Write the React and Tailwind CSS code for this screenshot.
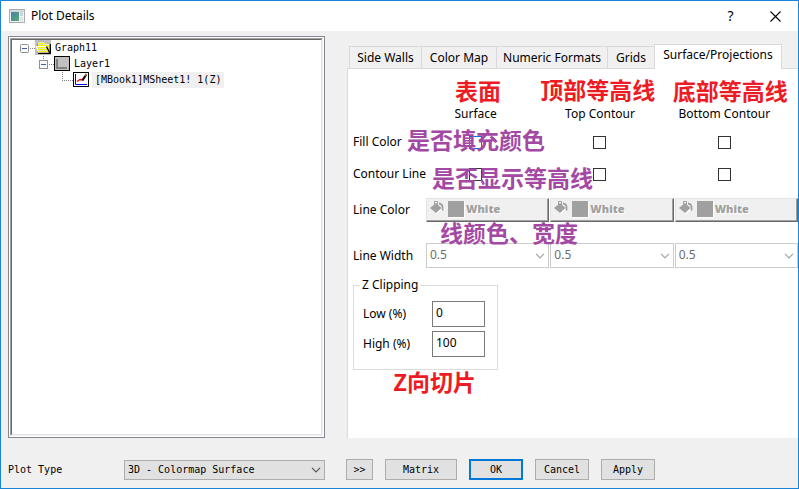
import React from "react";

const columns = [
  { id: "surface", title: "Surface", note: "表面", notePos: "left-[29px] -top-[28px]" },
  { id: "top", title: "Top Contour", note: "顶部等高线", notePos: "-left-[10px] -top-[29px]" },
  { id: "bottom", title: "Bottom Contour", note: "底部等高线", notePos: "-left-[2px] -top-[28px]" },
];

const rowGrid = "grid grid-cols-[72px_repeat(3,minmax(0,1fr))] gap-x-px items-center";
const noteBase =
  "pointer-events-none absolute z-10 whitespace-nowrap font-['Noto_Sans_CJK_SC',sans-serif] text-[23px] font-bold leading-6";
const mono = "font-['DejaVu_Sans_Mono','Liberation_Mono',monospace] text-[10px]";

function Note({ tone, pos, children }) {
  const color = tone === "red" ? "text-[#ed1c24]" : "text-[#a349a4]";
  return <span className={`${noteBase} ${color} ${pos}`}>{children}</span>;
}

function Chevron({ className }) {
  return (
    <svg
      viewBox="0 0 10 6"
      className={`pointer-events-none absolute top-1/2 h-[6px] w-[10px] -translate-y-1/2 ${className}`}
      fill="none"
      stroke="currentColor"
      strokeWidth="1.2"
    >
      <path d="M1 0.8 5 4.8 9 0.8" />
    </svg>
  );
}

function AppIcon() {
  return (
    <svg viewBox="0 0 16 14" className="h-[14px] w-4" shapeRendering="crispEdges">
      <defs>
        <linearGradient id="appPane" x1="0" y1="0" x2="1" y2="1">
          <stop offset="0" stopColor="#4d7fa5" />
          <stop offset="1" stopColor="#4fae77" />
        </linearGradient>
      </defs>
      <rect x="0.5" y="0.5" width="15" height="13" fill="#f3f3f3" stroke="#a9adb2" />
      <rect x="1" y="1" width="14" height="2" fill="#d4d8dc" />
      <rect x="2" y="3" width="8" height="9" fill="url(#appPane)" />
      <rect x="11" y="3" width="3" height="4" fill="#c9d4dc" />
      <rect x="11" y="8" width="3" height="4" fill="#dde2e6" />
    </svg>
  );
}

function Expander({ x, y }) {
  return (
    <g>
      <rect x={x + 0.5} y={y + 0.5} width="8" height="8" rx="1" fill="#fafafa" stroke="#919191" />
      <path d={`M${x + 2} ${y + 4.5}h5`} stroke="#3c5fb0" />
    </g>
  );
}

function GraphGlyph() {
  return (
    <svg viewBox="0 0 32 16" className="h-4 w-8 shrink-0">
      <defs>
        <pattern id="dither" width="2" height="2" patternUnits="userSpaceOnUse">
          <rect width="2" height="2" fill="#ffff00" />
          <rect width="1" height="1" fill="#d8d8b0" />
          <rect x="1" y="1" width="1" height="1" fill="#d8d8b0" />
        </pattern>
      </defs>
      <path d="M10 8.5h6" stroke="#808080" strokeDasharray="1 1" />
      <Expander x={0} y={4} />
      <rect x="15" y="0" width="16" height="15" fill="#c0c0c0" />
      <path d="M17.5 12.5v-9l2-2h4l2 2h4v9z" fill="url(#dither)" stroke="#808060" strokeWidth="0.8" />
      <path d="M18 3.5l1.500-1.500h4l2 2h4" fill="none" stroke="#fff" strokeWidth="0.8" />
      <path d="M30.5 4v9.500H18" fill="none" stroke="#000" />
      <path d="M18.500 12.500 16 7h10.500l3 5.500z" fill="url(#dither)" />
      <path d="M18.500 12.500 16 6.500h10.500" fill="none" stroke="#fff" />
      <path d="m26.500 6.500 3.500 7" stroke="#000" strokeWidth="1.300" />
    </svg>
  );
}

function LayerGlyph() {
  return (
    <svg viewBox="0 0 32 16" className="h-4 w-8 shrink-0" shapeRendering="crispEdges">
      <path d="M4.500 0v4M10 8.500h6" stroke="#808080" strokeDasharray="1 1" />
      <Expander x={0} y={4} />
      <rect x="15.500" y="0.500" width="15" height="14" fill="#c0c0c0" stroke="#000" />
      <path d="M18 3v9M17 12h11" stroke="#808080" strokeWidth="2" />
    </svg>
  );
}

function PlotGlyph() {
  return (
    <svg viewBox="0 0 28 16" className="h-4 w-7 shrink-0">
      <path d="M0.500 0v9M0 8.500h11" stroke="#808080" strokeDasharray="1 1" fill="none" />
      <rect x="11.500" y="0.500" width="15" height="14" fill="#fff" stroke="#000" />
      <path d="M13.500 2v10.500H25" fill="none" stroke="#0000ff" />
      <path d="m15 9.500 3-2 2 .5 3-4" fill="none" stroke="#ff0000" strokeWidth="1.400" />
      <path d="M24.500 2 22.500 5.500l-2 3" stroke="#000" strokeWidth="1.800" fill="none" />
      <path d="m24.500 2-1 1.800" stroke="#ffd000" />
    </svg>
  );
}

function Bucket() {
  return (
    <svg viewBox="0 0 14 14" className="h-[14px] w-[14px] shrink-0 text-[#a0a0a0]">
      <path d="M1 9 7 3.500 13 9 7 14z" fill="#fff" />
      <path d="M0 8 6 3l5.500 5L6 13z" fill="currentColor" />
      <path d="M4.500 5V1.500h3V6" fill="none" stroke="currentColor" />
      <path d="M9 3.500c3 .3 4 2 3.500 7" fill="none" stroke="currentColor" strokeWidth="1.800" />
    </svg>
  );
}

function ColorButton({ label }) {
  return (
    <button
      type="button"
      disabled
      aria-label={label}
      className="flex h-6 w-full items-start border border-t-[#e3e3e3] border-l-[#e3e3e3] border-r-[#696969] border-b-[#696969] bg-[#f0f0f0] pt-px pl-[3px] shadow-[inset_-1px_-1px_0_#a0a0a0]"
    >
      <Bucket />
      <span className="ml-1 mt-px h-4 w-4 shrink-0 bg-[#a0a0a0] shadow-[1px_1px_0_#fff]" />
      <span className="ml-[2px] font-['Open_Sans','Noto_Sans',sans-serif] text-[11px] font-extrabold leading-[17px] text-[#a0a0a0] [text-shadow:1px_1px_0_#fff]">
        White
      </span>
    </button>
  );
}

function WidthSelect({ label }) {
  return (
    <div className="relative">
      <select
        disabled
        aria-label={label}
        className="block h-[25px] w-full appearance-none border border-[#cccccc] bg-white pl-[3px] pb-px text-xs text-[#6d6d6d] opacity-100"
      >
        <option>0.5</option>
      </select>
      <Chevron className="right-1 text-[#a6a6a6]" />
    </div>
  );
}

function CheckRow({ label, focused, note }) {
  return (
    <div className={`${rowGrid} relative h-8`}>
      <span className="whitespace-nowrap">{label}</span>
      {columns.map((c, i) => (
        <div key={c.id} className="flex justify-center pr-6">
          <input
            type="checkbox"
            aria-label={`${label}, ${c.title}`}
            className={`h-[13px] w-[13px] appearance-none border bg-white checked:bg-[#0078d7] ${
              focused && i === 0 ? "border-[#0078d7]" : "border-[#333333]"
            }`}
          />
        </div>
      ))}
      {note}
    </div>
  );
}

const tabs = [
  ["Side Walls", "w-[73px]"],
  ["Color Map", "w-[76px]"],
  ["Numeric Formats", "w-[112px]"],
  ["Grids", "w-[48px]"],
];

function DialogButton({ children, className, primary }) {
  return (
    <button
      type="button"
      className={`h-[21px] bg-[#e1e1e1] leading-none hover:bg-[#e5f1fb] ${
        primary ? "border-2 border-[#0078d7]" : "border border-[#adadad]"
      } ${className}`}
    >
      {children}
    </button>
  );
}

export default function App() {
  return (
    <div className="flex min-h-screen flex-col border border-[#1883d7] bg-[#f0f0f0] font-['Noto_Sans','Open_Sans',sans-serif] text-xs leading-4 text-black">
      <header className="flex h-[30px] items-center bg-white pl-2">
        <AppIcon />
        <h1 className="ml-1.5">Plot Details</h1>
        <div className="ml-auto flex items-center">
          <button type="button" aria-label="Help" className="h-[30px] w-[45px] text-sm">
            ?
          </button>
          <button type="button" aria-label="Close" className="flex h-[30px] w-[45px] items-center justify-center">
            <svg viewBox="0 0 11 11" className="h-[11px] w-[11px]" stroke="#000" strokeWidth="1.100">
              <path d="M0.500 0.500l10 10M10.500 0.500l-10 10" />
            </svg>
          </button>
        </div>
      </header>

      <main className="flex flex-1 gap-[22px] pl-[7px]">
        <section
          aria-label="Plot tree"
          className="mt-[5px] flex w-[317px] shrink-0 border border-[#828790] bg-white p-px"
        >
          <div className="flex flex-1 border border-t-[#a0a0a0] border-l-[#a0a0a0] border-r-[#f0f0f0] border-b-[#f0f0f0]">
            <ul
              role="tree"
              className={`flex-1 border border-t-[#696969] border-l-[#696969] border-r-[#e3e3e3] border-b-[#e3e3e3] ${mono}`}
            >
              <li role="treeitem" className="flex h-4 items-center gap-[3px] pl-2">
                <GraphGlyph />
                Graph11
              </li>
              <li role="treeitem" className="flex h-4 items-center gap-[3px] pl-[27px]">
                <LayerGlyph />
                Layer1
              </li>
              <li role="treeitem" aria-selected="true" className="flex h-4 items-center gap-[2px] pl-[50px]">
                <PlotGlyph />
                <span className="h-4 bg-[#f0f0f0] px-[3px]">[MBook1]MSheet1! 1(Z)</span>
              </li>
            </ul>
          </div>
        </section>

        <section className="flex min-w-0 flex-1 flex-col pt-[13px]">
          <div role="tablist" className="flex items-end pl-[2px]">
            {tabs.map(([name, width]) => (
              <button
                key={name}
                type="button"
                role="tab"
                aria-selected="false"
                className={`-mr-px h-[22px] whitespace-nowrap border border-b-0 border-[#d9d9d9] ${width}`}
              >
                {name}
              </button>
            ))}
            <button
              type="button"
              role="tab"
              aria-selected="true"
              className="relative -mb-px h-[25px] w-[128px] whitespace-nowrap border border-b-0 border-[#d9d9d9] bg-white pb-1"
            >
              Surface/Projections
            </button>
          </div>

          <div
            role="tabpanel"
            className="flex-1 border-t border-l border-[#d9d9d9] bg-white pt-[37px] pl-[5px]"
          >
            <div className={rowGrid}>
              <span />
              {columns.map((c) => (
                <div key={c.id} className="relative pr-6 text-center">
                  <Note tone="red" pos={c.notePos}>
                    {c.note}
                  </Note>
                  {c.title}
                </div>
              ))}
            </div>

            <div className="pt-1">
              <CheckRow
                label="Fill Color"
                focused
                note={
                  <Note tone="purple" pos="left-[54px] top-px">
                    是否填充颜色
                  </Note>
                }
              />
              <CheckRow
                label="Contour Line"
                note={
                  <Note tone="purple" pos="left-[79px] top-[7px]">
                    是否显示等高线
                  </Note>
                }
              />
            </div>

            <div className={`${rowGrid} mt-2`}>
              <span>Line Color</span>
              {columns.map((c) => (
                <ColorButton key={c.id} label={`Line Color, ${c.title}`} />
              ))}
            </div>

            <div className={`${rowGrid} relative mt-[21px]`}>
              <span>Line Width</span>
              {columns.map((c) => (
                <WidthSelect key={c.id} label={`Line Width, ${c.title}`} />
              ))}
              <Note tone="purple" pos="left-[87px] -top-[23px]">
                线颜色、宽度
              </Note>
            </div>

            <fieldset className="relative mt-[9px] w-[145px] border border-[#dcdcdc] pb-3">
              <legend className="ml-[6px] px-[2px]">Z Clipping</legend>
              <div className="grid grid-cols-[69px_53px] items-center gap-y-1 pt-2 pl-[9px]">
                <label htmlFor="low">Low (%)</label>
                <input
                  id="low"
                  defaultValue="0"
                  className="h-[26px] w-full border border-[#7a7a7a] bg-white pl-[3px] pb-[3px] outline-none"
                />
                <label htmlFor="high">High (%)</label>
                <input
                  id="high"
                  defaultValue="100"
                  className="h-[26px] w-full border border-[#7a7a7a] bg-white pl-[3px] pb-[3px] outline-none"
                />
              </div>
              <Note tone="red" pos="left-[39px] top-full">
                Z向切片
              </Note>
            </fieldset>
          </div>
        </section>
      </main>

      <footer className={`flex items-center pt-[21px] pb-2 pl-[7px] ${mono}`}>
        <label htmlFor="plot-type" className="w-[116px]">
          Plot Type
        </label>
        <div className="relative mr-[21px] w-[201px]">
          <select
            id="plot-type"
            className="block h-5 w-full appearance-none border border-[#adadad] bg-[#e1e1e1] pl-[3px]"
          >
            <option>3D - Colormap Surface</option>
          </select>
          <Chevron className="right-1 text-[#555555]" />
        </div>
        <div className="flex gap-3">
          <DialogButton className="w-[27px]">&gt;&gt;</DialogButton>
          <DialogButton className="w-[72px]">Matrix</DialogButton>
          <DialogButton primary className="w-[54px]">
            OK
          </DialogButton>
          <DialogButton className="w-[54px]">Cancel</DialogButton>
          <DialogButton className="w-[54px]">Apply</DialogButton>
        </div>
      </footer>
    </div>
  );
}
